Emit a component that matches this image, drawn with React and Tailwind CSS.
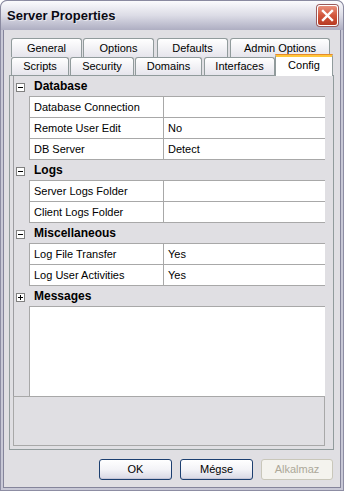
import React from "react";

const F = { fontFamily: '"Liberation Sans", Arial, sans-serif' };

function Box({ plus }) {
  return (
    <div className="relative w-[9px] h-[9px] border border-[#808080] bg-white">
      <div className="absolute left-[1px] top-[3px] w-[5px] h-px bg-black" />
      {plus && <div className="absolute left-[3px] top-[1px] w-px h-[5px] bg-black" />}
    </div>
  );
}

function Cat({ name, plus }) {
  return (
    <div className="flex h-[21px] shrink-0">
      <div className="w-[15px] bg-[#e0dfe3] flex items-center pl-[2px] pt-[1px]">
        <Box plus={plus} />
      </div>
      <div className="flex-1 bg-[#e0dfe3] border-b border-[#a8a8a8] flex items-center pl-[5px] font-bold text-[12px] text-black">
        {name}
      </div>
    </div>
  );
}

function Prop({ name, value }) {
  return (
    <div className="flex h-[21px] shrink-0">
      <div className="w-[15px] bg-[#e0dfe3]" />
      <div className="flex-1 flex border-l border-b border-[#a8a8a8] bg-white text-[11px] text-black">
        <div className="w-[134px] border-r border-[#a8a8a8] flex items-center pl-[4px]">{name}</div>
        <div className="flex-1 flex items-center pl-[4px]">{value}</div>
      </div>
    </div>
  );
}

function Tab({ label, w, ml = 0 }) {
  return (
    <div
      style={{ width: w, marginLeft: ml }}
      className="h-full shrink-0 rounded-t-[3px] border border-b-0 border-[#919b9c] bg-gradient-to-b from-white to-[#e6e5ec] flex items-center justify-center text-[11px] text-black"
    >
      {label}
    </div>
  );
}

function Btn({ label, disabled, def }) {
  if (disabled) {
    return (
      <div className="w-[72px] h-[21px] rounded-[3px] border border-[#c9c7ba] bg-[#f4f3ee] flex items-center justify-center text-[11px] text-[#aca899]">
        {label}
      </div>
    );
  }
  return (
    <div className="w-[73px] h-[21px] rounded-[3px] border border-[#1c3f70] bg-gradient-to-b from-white via-[#f3f3f7] to-[#d8d8e4] flex items-center justify-center text-[11px] text-black shadow-[inset_0_-1px_0_#c6c6d6]">
      {label}
    </div>
  );
}

export default function App() {
  return (
    <div style={F} className="w-[344px] h-[491px] flex flex-col rounded-t-[7px] overflow-hidden bg-[#8d8da3]">
      {/* Title bar */}
      <div className="h-[30px] shrink-0 flex items-center justify-between rounded-t-[7px] border-t border-x border-[#8a8aa0] bg-gradient-to-b from-[#fbfbfd] via-[#dcdce6] to-[#aeaec2] pl-[6px] pr-[5px]">
        <span className="text-[13px] font-bold text-[#0a0a14] [text-shadow:1px_1px_0_#ffffff80]">Server Properties</span>
        <div className="w-[21px] h-[21px] rounded-[3px] border border-white bg-gradient-to-b from-[#e8907c] via-[#d2563c] to-[#b83a22] flex items-center justify-center shadow-[0_0_0_1px_#9a5a5a]">
          <svg width="13" height="13" viewBox="0 0 13 13">
            <path d="M2 2 L11 11 M11 2 L2 11" stroke="white" strokeWidth="2.4" strokeLinecap="square" />
          </svg>
        </div>
      </div>

      {/* Frame */}
      <div className="flex-1 flex flex-col px-px pb-px">
        <div className="flex-1 flex flex-col border-x-2 border-b-2 border-[#c8c8d6]">
          <div className="flex-1 flex flex-col border-x border-b border-[#85859b] bg-[#e0dfe3]">
            {/* Tabs row 1 */}
            <div className="mt-[8px] h-[19px] flex ml-[7px]">
              <Tab label="General" w={71} />
              <Tab label="Options" w={71} ml={1} />
              <Tab label="Defaults" w={71} ml={3} />
              <Tab label="Admin Options" w={100} ml={2} />
            </div>
            {/* Tabs row 2 */}
            <div className="h-[18px] flex items-end ml-[7px]">
              <Tab label="Scripts" w={58} />
              <Tab label="Security" w={64} ml={1} />
              <Tab label="Domains" w={67} ml={1} />
              <Tab label="Interfaces" w={71} ml={2} />
              <div className="relative z-10 w-[58px] h-[22px] -mt-[3px] -mb-px shrink-0 rounded-t-[3px] border-x border-[#919b9c] bg-white flex flex-col text-[11px] text-black">
                <div className="h-px bg-[#e68b2c] rounded-t-[3px] -mx-px" />
                <div className="h-[2px] bg-[#ffc73c]" />
                <div className="flex-1 flex items-center justify-center pb-[2px]">Config</div>
              </div>
            </div>
            {/* Panel */}
            <div className="ml-[5px] w-[325px] h-[375px] border border-[#919b9c] bg-[#e0dfe3] flex flex-col pl-[3px] pr-[8px] pb-[3px]">
              <div className="h-[320px] flex flex-col border-l border-[#9d9da1] bg-white">
                <Cat name="Database" />
                <Prop name="Database Connection" value="" />
                <Prop name="Remote User Edit" value="No" />
                <Prop name="DB Server" value="Detect" />
                <Cat name="Logs" />
                <Prop name="Server Logs Folder" value="" />
                <Prop name="Client Logs Folder" value="" />
                <Cat name="Miscellaneous" />
                <Prop name="Log File Transfer" value="Yes" />
                <Prop name="Log User Activities" value="Yes" />
                <Cat name="Messages" plus />
                <div className="flex-1 flex">
                  <div className="w-[15px] bg-[#e0dfe3]" />
                  <div className="flex-1 border-l border-[#a8a8a8] bg-white" />
                </div>
              </div>
              <div className="h-[50px] border border-[#a8a8a8] bg-[#e0dfe3]" />
            </div>
            {/* Buttons */}
            <div className="mt-[9px] flex ml-[95px] gap-[8px]">
              <Btn label="OK" def />
              <Btn label="Mégse" />
              <Btn label="Alkalmaz" disabled />
            </div>
          </div>
        </div>
      </div>
    </div>
  );
}
